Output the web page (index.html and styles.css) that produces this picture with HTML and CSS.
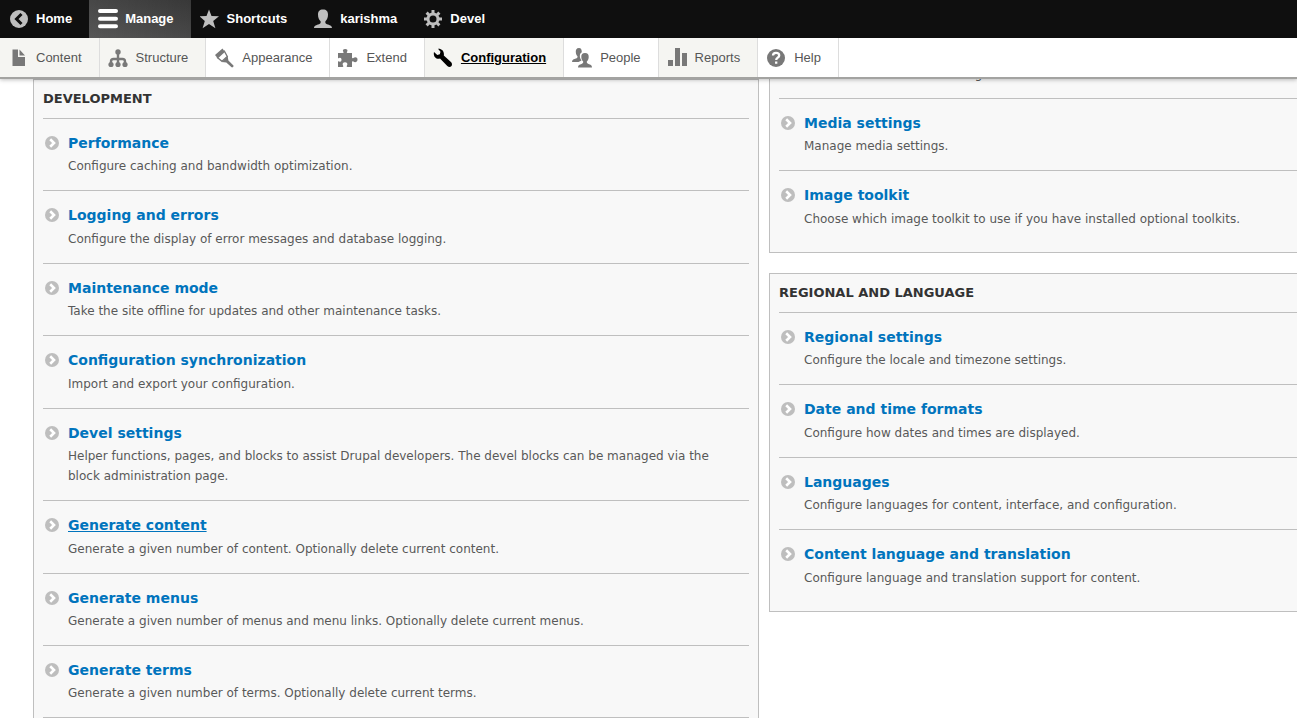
FILE: index.html
```html
<!DOCTYPE html>
<html lang="en">
<head>
<meta charset="utf-8">
<title>Configuration</title>
<link rel="stylesheet" href="styles.css">
</head>
<body>
<svg class="defs" aria-hidden="true">
  <symbol id="go" viewBox="0 0 14 14"><circle cx="7" cy="7" r="7" fill="#bebebe"/><path d="M5.200 3.300 9 7 5.200 10.700" fill="none" stroke="#fff" stroke-width="2.600"/></symbol>
</svg>
<header class="toolbar">
  <nav class="bar" aria-label="Administration">
    <a class="tab" href="#"><svg class="icon" viewBox="0 0 20 20"><circle cx="10" cy="10" r="9" fill="#bebebe"/><path d="M12.5 5 7.5 10l5 5" fill="none" stroke="#0f0f0f" stroke-width="3"/></svg>Home</a>
    <a class="tab tab--active" href="#"><svg class="icon" viewBox="0 0 20 20"><path d="M2 2h16M2 9.700h16M2 17.300h16" stroke="#fff" stroke-width="4" stroke-linecap="round"/></svg>Manage</a>
    <a class="tab" href="#"><svg class="icon" viewBox="0 0 20 20"><path d="m9 .5 2.500 6.600 7.500.2-5.800 4.600 2.200 7.300L9 15l-6.400 4.200 2.200-7.300L-.5 7.300l7-.2z" fill="#bebebe"/></svg>Shortcuts</a>
    <a class="tab" href="#"><svg class="icon" viewBox="0 0 20 20"><path d="M10 .5C6.500.5 5 2.500 5 5.500c0 3 1 5.500 2.600 6.700.3 1.800-.2 2.500-1.600 3-2.500.8-5 1.300-5 3.800h18c0-2.500-2.500-3-5-3.800-1.400-.5-1.900-1.200-1.600-3C14 11 15 8.500 15 5.500c0-3-1.500-5-5-5z" fill="#bebebe"/></svg>karishma</a>
    <a class="tab" href="#"><svg class="icon" viewBox="0 0 20 20"><circle cx="10" cy="10" r="5" fill="none" stroke="#bebebe" stroke-width="3"/><path d="M10 1v4M10 15v4M1 10h4M15 10h4M3.600 3.600l2.900 2.900M13.500 13.500l2.900 2.900M16.400 3.600l-2.900 2.900M6.500 13.500l-2.900 2.900" stroke="#bebebe" stroke-width="3"/></svg>Devel</a>
  </nav>
  <nav class="tray" aria-label="Manage">
    <a class="link link--tint" href="#"><svg class="icon" viewBox="0 0 20 20"><path d="M4.500 1.500H10v7.500h7V18H4.500zM11.500 1.500 17 7.500h-5.500z" fill="#787878"/></svg>Content</a>
    <a class="link link--tint" href="#"><svg class="icon" viewBox="0 0 20 20"><path d="M10 4v13M3 17v-3.500c0-2 1-2.500 2.500-2.500h9c1.500 0 2.500.5 2.500 2.500V17" fill="none" stroke="#787878" stroke-width="2.400"/><circle cx="10" cy="4" r="2.700" fill="#787878"/><circle cx="3" cy="16.500" r="2.600" fill="#787878"/><circle cx="10" cy="16.500" r="2.600" fill="#787878"/><circle cx="17" cy="16.500" r="2.600" fill="#787878"/></svg>Structure</a>
    <a class="link" href="#"><svg class="icon" viewBox="0 0 20 20"><path d="M8.500.5 1 7l2.800 3.500L10.800 4z" fill="#787878"/><path d="m10 2.500 3.300 6L8 13.300l-5-4" fill="none" stroke="#787878" stroke-width="1.400"/><path d="m7.800 13.900 5.900-5.500.7 4 4.800 4.800c1.100 1.100-.8 2.900-1.900 1.900l-5-4.600z" fill="#787878"/></svg>Appearance</a>
    <a class="link" href="#"><svg class="icon" viewBox="0 0 20 20"><path d="M0 5h5c.8 0 .8-.6.3-1.200C4.300 2.400 5.300 1 7.200 1s2.900 1.400 1.900 2.800c-.5.600-.5 1.200.3 1.200H14v4.500c0 .8.800 1 1.400.4C17 8.500 19.500 9 19.500 11.500S17 15 15.400 13.500c-.600-.6-1.400-.4-1.400.4V19H9.500c-1 0-1-.8-.5-1.500C10 16 9 14.300 7 14.300S4 16 5 17.500c.5.700.5 1.500-.5 1.500H0v-5c0-.8.300-1 1.200-.5 1.300.8 2.300-.2 2.300-1.700S2.500 9.200 1.200 10C.3 10.500 0 10.300 0 9.500z" fill="#787878"/></svg>Extend</a>
    <a class="link link--tint link--active" href="#"><svg class="icon" viewBox="0 0 20 20"><path d="M1 4C0 8.500 3 11.500 7 10.500l7.300 7.500c3 2.500 6.200-.7 3.900-3.700L10.800 7.500C11.500 3.500 9 .5 5 .8l2.500 2.900-.7 2.500-2.500.8z"/></svg>Configuration</a>
    <a class="link" href="#"><svg class="icon" viewBox="0 0 20 20"><path d="M7 0C4.500 0 3.600 1.700 3.800 4c.1 2 .7 3.400 1.700 4.200.1 1.500-.4 2-1.600 2.400C2 11.200 0 11.500 0 14h6.500c1-.8 2-1.200 3-1.600C8 10.500 7.500 8.500 8 6.500c.2-1 .8-1.800 1.800-2.300C9.800 1.500 9 0 7 0z" fill="#787878"/><path d="M13 5c-2.700 0-3.800 1.500-3.700 4 .1 2 .8 3.700 1.900 4.500.1 1.500-.4 2-1.700 2.400-1.900.6-3.500 1.100-3.500 3.600h14c0-2.500-1.600-3-3.500-3.600-1.300-.4-1.800-.9-1.700-2.400C15.900 12.700 16.600 11 16.700 9c.1-2.500-1-4-3.700-4z" fill="#787878"/></svg>People</a>
    <a class="link link--tint" href="#"><svg class="icon" viewBox="0 0 20 20"><path d="M1 12h5v6H1zM8 0h5v18H8zM15 5h5v13h-5z" fill="#787878"/></svg>Reports</a>
    <a class="link" href="#"><svg class="icon" viewBox="0 0 20 20"><circle cx="10" cy="10" r="9" fill="#787878"/><path d="M7 7.600C7 5.500 8.300 4.800 10 4.800s3.200.9 3.200 2.600c0 2.300-3 2.200-3 4.700M10.200 13.400v2.400" fill="none" stroke="#fff" stroke-width="2.300"/></svg>Help</a>
  </nav>
</header>
<main class="columns">
  <section class="panel">
    <h2 class="heading">Development</h2>
    <ul class="list list--ruled">
      <li class="item"><svg class="go"><use href="#go"/></svg><a class="title" href="#">Performance</a><p class="desc">Configure caching and bandwidth optimization.</p></li>
      <li class="item"><svg class="go"><use href="#go"/></svg><a class="title" href="#">Logging and errors</a><p class="desc">Configure the display of error messages and database logging.</p></li>
      <li class="item"><svg class="go"><use href="#go"/></svg><a class="title" href="#">Maintenance mode</a><p class="desc">Take the site offline for updates and other maintenance tasks.</p></li>
      <li class="item"><svg class="go"><use href="#go"/></svg><a class="title" href="#">Configuration synchronization</a><p class="desc">Import and export your configuration.</p></li>
      <li class="item"><svg class="go"><use href="#go"/></svg><a class="title" href="#">Devel settings</a><p class="desc">Helper functions, pages, and blocks to assist Drupal developers. The devel blocks can be managed via the block administration page.</p></li>
      <li class="item"><svg class="go"><use href="#go"/></svg><a class="title title--hover" href="#">Generate content</a><p class="desc">Generate a given number of content. Optionally delete current content.</p></li>
      <li class="item"><svg class="go"><use href="#go"/></svg><a class="title" href="#">Generate menus</a><p class="desc">Generate a given number of menus and menu links. Optionally delete current menus.</p></li>
      <li class="item"><svg class="go"><use href="#go"/></svg><a class="title" href="#">Generate terms</a><p class="desc">Generate a given number of terms. Optionally delete current terms.</p></li>
    </ul>
  </section>
  <div class="side">
    <section class="panel panel--side panel--scrolled">
      <p class="desc desc--scrolled">Set how media files are being stored.</p>
      <ul class="list">
        <li class="item"><svg class="go"><use href="#go"/></svg><a class="title" href="#">Media settings</a><p class="desc">Manage media settings.</p></li>
        <li class="item"><svg class="go"><use href="#go"/></svg><a class="title" href="#">Image toolkit</a><p class="desc">Choose which image toolkit to use if you have installed optional toolkits.</p></li>
      </ul>
    </section>
    <section class="panel panel--side">
      <h2 class="heading">Regional and language</h2>
      <ul class="list">
        <li class="item"><svg class="go"><use href="#go"/></svg><a class="title" href="#">Regional settings</a><p class="desc">Configure the locale and timezone settings.</p></li>
        <li class="item"><svg class="go"><use href="#go"/></svg><a class="title" href="#">Date and time formats</a><p class="desc">Configure how dates and times are displayed.</p></li>
        <li class="item"><svg class="go"><use href="#go"/></svg><a class="title" href="#">Languages</a><p class="desc">Configure languages for content, interface, and configuration.</p></li>
        <li class="item"><svg class="go"><use href="#go"/></svg><a class="title" href="#">Content language and translation</a><p class="desc">Configure language and translation support for content.</p></li>
      </ul>
    </section>
  </div>
</main>
</body>
</html>
```
FILE: styles.css
```css
* { box-sizing: border-box; }
body {
  margin: 0;
  background: #fff;
  color: #595959;
  font-family: "DejaVu Sans", sans-serif;
}
.defs { display: none; }

/* Toolbar */
.toolbar {
  position: sticky;
  top: 0;
  z-index: 2;
  font: 13px/20px "Liberation Sans", Arial, sans-serif;
}
.bar { display: flex; height: 38px; background: #0f0f0f; }
.tab {
  display: flex;
  align-items: center;
  gap: 7px;
  padding: 0 17px 0 9px;
  color: #fff;
  font-weight: bold;
  text-decoration: none;
}
.tab--active { background: linear-gradient(90deg, rgba(255,255,255,0.08), transparent), linear-gradient(#383838, #484848); }
.icon { width: 20px; height: 20px; flex: none; }
.tray {
  display: flex;
  height: 41px;
  background: #fff;
  border-bottom: 2px solid #a3a3a1;
  box-shadow: 0 1px 4px rgba(0,0,0,0.25);
}
.link {
  display: flex;
  align-items: center;
  gap: 8px;
  padding: 0 17px 0 8px;
  border-right: 1px solid #ddd;
  color: #565656;
  text-decoration: none;
}
.link--tint { background: #f5f5f2; }
.link--active { color: #000; font-weight: bold; text-decoration: underline; }

/* Configuration panels */
.columns {
  display: grid;
  grid-template-columns: 11fr 8fr;
  gap: 10px;
  padding-left: 33px;
}
.panel {
  padding: 0 9px;
  background: #f8f8f8;
  border: 1px solid #bfbfbf;
}
.panel--side { margin-bottom: 20px; padding: 0 0 9px 9px; border-right: 0; }
.panel--scrolled { margin-top: -15px; border-top: 0; }
.heading {
  margin: 0;
  color: #333;
  font-size: 13px;
  line-height: 38px;
  text-transform: uppercase;
}
.list { margin: 0; padding: 0; list-style: none; }
.list--ruled { border-bottom: 1px solid #bfbfbf; }
.item {
  display: grid;
  grid-template-columns: 18px 1fr;
  column-gap: 7px;
  align-items: center;
  padding: 14px 0;
  border-top: 1px solid #bfbfbf;
}
.go { width: 14px; height: 14px; margin-left: 2px; }
.title {
  justify-self: start;
  color: #0074bd;
  font-size: 14px;
  font-weight: bold;
  line-height: 20px;
  text-decoration: none;
}
.title:hover, .title--hover { text-decoration: underline; }
.desc {
  grid-column: 2;
  margin: 3px 0 0;
  padding-right: 16px;
  font-size: 12px;
  line-height: 20px;
}
.item:nth-child(even) .desc { margin-top: 4px; }
.list--ruled .item:last-child .desc { margin-top: 3px; }
.desc--scrolled { margin: 0 0 14px 25px; }
```
